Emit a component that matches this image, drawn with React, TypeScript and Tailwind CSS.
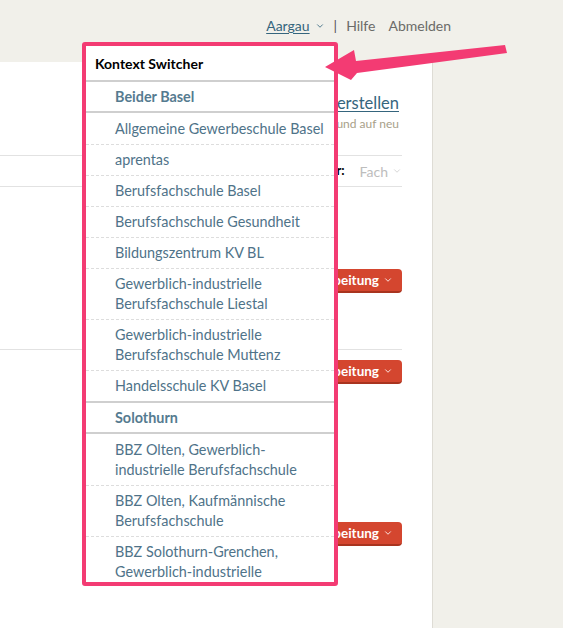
import { ChevronDown } from 'lucide-react';

type Entry = { kind: 'section' | 'item'; label: string[] };

const entries: Entry[] = [
  { kind: 'section', label: ['Beider Basel'] },
  { kind: 'item', label: ['Allgemeine Gewerbeschule Basel'] },
  { kind: 'item', label: ['aprentas'] },
  { kind: 'item', label: ['Berufsfachschule Basel'] },
  { kind: 'item', label: ['Berufsfachschule Gesundheit'] },
  { kind: 'item', label: ['Bildungszentrum KV BL'] },
  { kind: 'item', label: ['Gewerblich-industrielle', 'Berufsfachschule Liestal'] },
  { kind: 'item', label: ['Gewerblich-industrielle', 'Berufsfachschule Muttenz'] },
  { kind: 'item', label: ['Handelsschule KV Basel'] },
  { kind: 'section', label: ['Solothurn'] },
  { kind: 'item', label: ['BBZ Olten, Gewerblich-', 'industrielle Berufsfachschule'] },
  { kind: 'item', label: ['BBZ Olten, Kaufmännische', 'Berufsfachschule'] },
  { kind: 'item', label: ['BBZ Solothurn-Grenchen,', 'Gewerblich-industrielle', 'Berufsfachschule'] },
];

function StatusButton() {
  return (
    <button className="flex h-[24px] items-center gap-[4px] rounded-[4px] border-b-2 border-[#a9341f] bg-[#d4462f] px-[9px] text-[13.5px] font-bold text-white">
      In Bearbeitung
      <ChevronDown className="size-[10px]" strokeWidth={2} />
    </button>
  );
}

function ContextSwitcher() {
  return (
    <div className="absolute left-[82px] top-[42px] h-[544px] w-[256px] overflow-hidden rounded-[3px] border-4 border-[#f33b73] bg-white">
      <div className="flex h-[36px] items-center border-b-2 border-[#cfcfcf] pl-[9px] text-[14px] font-bold text-black">
        Kontext Switcher
      </div>
      {entries.map((e, i) => {
        const prev = entries[i - 1];
        if (e.kind === 'section') {
          return (
            <div
              key={i}
              className={
                i === 0
                  ? 'border-b-2 border-[#cfcfcf] pb-[4px] pl-[29px] pt-[5px] text-[14.4px] font-bold leading-[20px] text-[#557b90]'
                  : 'border-y-2 border-[#cfcfcf] pb-[4px] pl-[29px] pt-[5px] text-[14.4px] font-bold leading-[20px] text-[#557b90]'
              }
            >
              {e.label[0]}
            </div>
          );
        }
        const dashed = prev && prev.kind === 'item';
        return (
          <div
            key={i}
            className={
              dashed
                ? 'border-t border-dashed border-[#dddddd] py-[5px] pl-[29px] text-[14.4px] leading-[20px] text-[#4f7389]'
                : 'pb-[5px] pl-[29px] pt-[6px] text-[14.4px] leading-[20px] text-[#4f7389]'
            }
          >
            {e.label.map((l) => (
              <div key={l}>{l}</div>
            ))}
          </div>
        );
      })}
    </div>
  );
}

export default function App() {
  return (
    <div className="relative h-[628px] w-[563px] overflow-hidden bg-[#f1f0ea] font-['Lato','Open_Sans',sans-serif]">
      {/* top bar */}
      <header className="flex h-[62px] items-start justify-end pr-[112px] pt-[16px] text-[14px] leading-[20px] text-[#6b6b68]">
        <a className="flex items-center gap-[5px] text-[#35657d]">
          <span className="underline underline-offset-2">Aargau</span>
          <ChevronDown className="size-[10px]" strokeWidth={2} />
        </a>
        <span className="mx-[9px] text-[#555]">|</span>
        <span>Hilfe</span>
        <span className="ml-[13px]">Abmelden</span>
      </header>

      <div className="flex h-[566px]">
        <main className="w-[433px] border-r border-[#dedcd5] bg-white pr-[30px]">
          <div className="flex h-[94px] flex-col items-end border-b border-[#e2e2e2] pr-[3px] pt-[31px]">
            <a className="text-[16.5px] leading-[20px] text-[#35657d] underline underline-offset-2">
              Neues Dossier erstellen
            </a>
            <p className="mt-[3px] text-[12px] leading-[16px] text-[#a89f8a]">
              Vorlage wählen und auf neu
            </p>
          </div>
          <div className="flex h-[31px] items-center justify-end border-b border-[#e2e2e2] text-[13px]">
            <span className="font-bold text-black">Filter:</span>
            <span className="ml-[15px] flex items-center gap-[4px] text-[14px] text-[#bdbdbd]">
              Fach
              <ChevronDown className="size-[10px]" strokeWidth={1.5} />
            </span>
          </div>
          <div className="flex h-[163px] items-start justify-end border-b border-[#e2e2e2] pt-[82px]">
            <StatusButton />
          </div>
          <div className="flex flex-col items-end pt-[10px]">
            <StatusButton />
            <div className="mt-[138px]">
              <StatusButton />
            </div>
          </div>
        </main>
      </div>

      <ContextSwitcher />

      {/* annotation arrow */}
      <svg className="pointer-events-none absolute inset-0" width="563" height="628" viewBox="0 0 563 628">
        <polygon
          points="325,67 354,50 356,61 505,45 507,53 357,73 351,80"
          fill="#f33b73"
        />
      </svg>
    </div>
  );
}
